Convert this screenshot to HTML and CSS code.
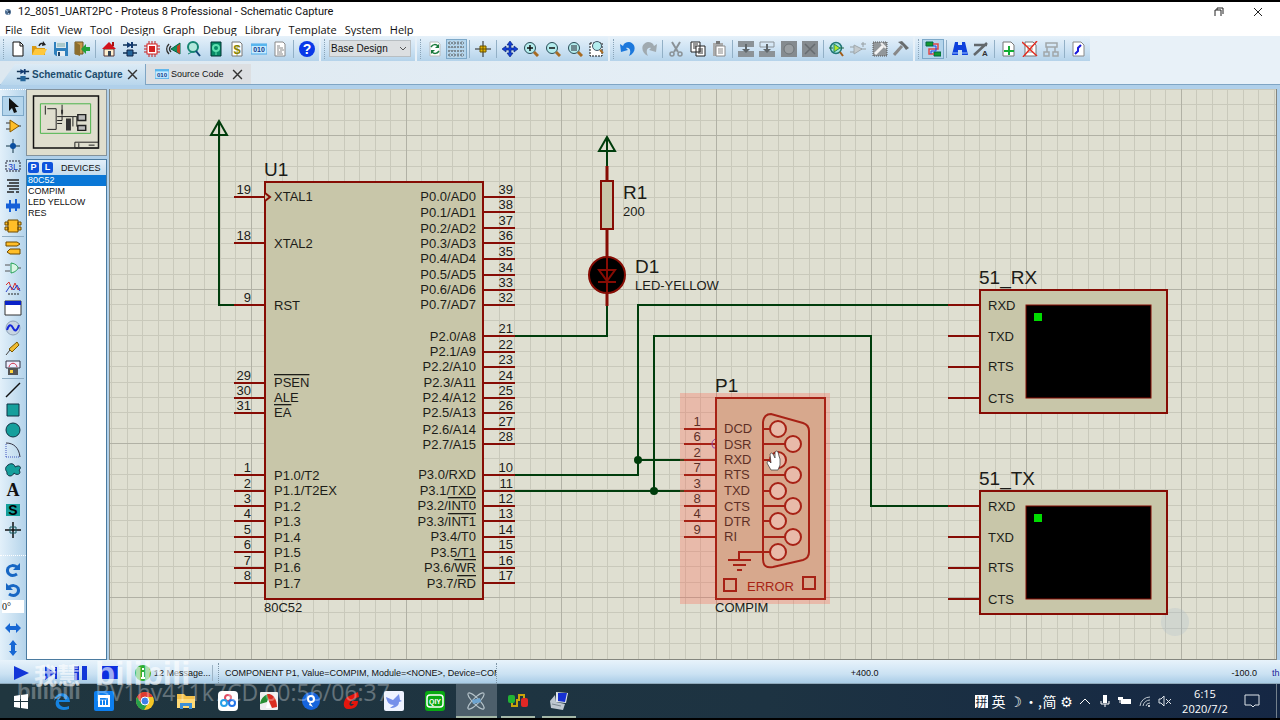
FILE: index.html
```html
<!DOCTYPE html>
<html lang="en">
<head>
<meta charset="utf-8">
<title>12_8051_UART2PC - Proteus 8 Professional - Schematic Capture</title>
<link rel="stylesheet" href="styles.css">
</head>
<body>
<div class="app">
  <header class="titlebar">
    <svg class="app-icon" viewBox="0 0 10 10"><circle cx="5" cy="5" r="3" fill="#4d6d91"/><path d="M3 3l3 2-1 3" stroke="#b6cbe0" fill="none"/><circle cx="6" cy="5" r="1" fill="#1b2c42"/></svg>
    <h1 class="title">12_8051_UART2PC - Proteus 8 Professional - Schematic Capture</h1>
    <div class="window-controls">
      <button aria-label="Restore"><svg viewBox="0 0 10 10"><path d="M1 9V3h6v6M3 3V1h6v6" fill="none" stroke="#222"/></svg></button>
      <button aria-label="Close"><svg viewBox="0 0 10 10"><path d="M1 1l8 8M9 1L1 9" fill="none" stroke="#222"/></svg></button>
    </div>
  </header>
  <nav class="menubar">
    <button>File</button><button>Edit</button><button>View</button><button>Tool</button><button>Design</button><button>Graph</button><button>Debug</button><button>Library</button><button>Template</button><button>System</button><button>Help</button>
  </nav>

  <div class="toolbars">
    <div class="group">
      <div class="seg four">
        <button aria-label="New"><svg viewBox="0 0 16 16"><path d="M3 1h7l3 3v11H3z" fill="#fff" stroke="#111"/><path d="M10 1v4h3" fill="none" stroke="#111"/></svg></button>
        <button aria-label="Open"><svg viewBox="0 0 16 16"><path d="M1 14V5h4l1 2h8v7z" fill="#d99a14"/><path d="M1 14l3-6h12l-3 6z" fill="#ffc83c"/><path d="M8 5c1-3 3-3 5-2" fill="none" stroke="#222" stroke-width="1.5"/><path d="M12 0l3 4-4 1z" fill="#222"/></svg></button>
        <button aria-label="Save"><svg viewBox="0 0 16 16"><path d="M1 1h14v14H3l-2-2z" fill="#2f80bd"/><path d="M3 1h10v6H3z" fill="#dce8ee"/><path d="M4 3h8M4 5h8" stroke="#7aa"/><path d="M4 10h8v5H4z" fill="#e8eef2"/><path d="M5 11h2v4H5z" fill="#246"/></svg></button>
        <button aria-label="Close project"><svg viewBox="0 0 16 16"><path d="M1 1h8v12H1z" fill="#c69a4a" stroke="#6b531f"/><path d="M1 1l5 3v11l-5-2z" fill="#8d6e2d"/><path d="M7 8l5-5v3h4v4h-4v3z" fill="#22a03a"/></svg></button>
      </div>
      <i class="sep"></i>
      <div class="seg nine">
        <button aria-label="Home"><svg viewBox="0 0 16 16"><path d="M3 8h10v7H3z" fill="#fff0d0" stroke="#533"/><path d="M1 8l7-7 7 7z" fill="#d2131c"/><path d="M11 1h2v4h-2z" fill="#a11"/><path d="M7 10h3v5H7z" fill="#345"/></svg></button>
        <button aria-label="Schematic capture"><svg viewBox="0 0 16 16"><path d="M1 4h14M1 12h14" stroke="#135" stroke-width="1.5"/><path d="M5 1l5 3-5 3z" fill="#123a70"/><path d="M10 1v6" stroke="#123a70" stroke-width="2"/><path d="M5 9h6v6H5z" fill="#24659a" stroke="#124"/></svg></button>
        <button aria-label="PCB layout"><svg viewBox="0 0 16 16"><path d="M0 5h16M0 8h16M0 11h16M5 0v16M8 0v16M11 0v16" stroke="#c31d1d"/><rect x="3" y="3" width="10" height="10" fill="#fff" stroke="#d32020"/><rect x="5" y="5" width="6" height="6" fill="#d32020"/></svg></button>
        <button aria-label="3D viewer"><svg viewBox="0 0 16 16"><path d="M15 2L6 8l9 5z" fill="#12905a" stroke="#064"/><path d="M12 5v6l3 2V3z" fill="#c44022"/><path d="M4 3c-3 3-3 7 0 10M6 5c-2 2-2 4 0 6" fill="none" stroke="#333" stroke-width="1.5"/></svg></button>
        <button aria-label="Gerber viewer"><svg viewBox="0 0 16 16"><circle cx="7" cy="6" r="5" fill="#b2e8dc" stroke="#168572" stroke-width="2"/><path d="M10 10l4 5" stroke="#147" stroke-width="2"/><path d="M2 13l4-2" stroke="#168572"/></svg></button>
        <button aria-label="Design explorer"><svg viewBox="0 0 16 16"><path d="M3 1h10v14H3z" fill="#078b66" stroke="#033"/><circle cx="8" cy="7" r="3" fill="none" stroke="#5fe0b0" stroke-width="2"/><path d="M8 10v4" stroke="#5fe0b0"/></svg></button>
        <button aria-label="Bill of materials"><svg viewBox="0 0 16 16"><path d="M3 1h8l2 2v12H3z" fill="#fff" stroke="#777"/><text x="8" y="13" class="glyph money">$</text></svg></button>
        <button aria-label="Source code"><svg viewBox="0 0 16 16"><path d="M0 3h16v10H0z" fill="#c7ecff" stroke="#49a9e8"/><path d="M0 3h16v2H0z" fill="#58b6ee"/><text x="8" y="11" class="glyph bits">010</text></svg></button>
        <button aria-label="Project notes"><svg viewBox="0 0 16 16"><path d="M3 1h8l2 2v12H3z" fill="#fff" stroke="#888"/><path d="M5 5h3M5 7h6M5 9h2M8 9h4M5 11h5M5 13h6" stroke="#888"/></svg></button>
      </div>
      <i class="sep"></i>
      <div class="seg one"><button aria-label="Help"><svg viewBox="0 0 16 16"><circle cx="8" cy="8" r="8" fill="#0a39e8"/><text x="8" y="13" class="glyph help">?</text></svg></button></div>
    </div>
    <div class="group">
      <div class="variant">
        <select aria-label="Design variant"><option>Base Design</option></select>
        <svg viewBox="0 0 8 8"><path d="M1 2l3 3 3-3" fill="none" stroke="#555"/></svg>
      </div>
    </div>
    <div class="group">
      <div class="seg two">
        <button aria-label="Redraw"><svg viewBox="0 0 16 16"><path d="M3 1h8l2 2v12H3z" fill="#fff" stroke="#bbb"/><path d="M4 6c2-3 5-3 7-1M12 10c-2 3-5 3-7 1" fill="none" stroke="#1a7a3c" stroke-width="1.5"/><path d="M12 3v4H8zM4 13V9h4z" fill="#1a7a3c"/></svg></button>
        <button class="pressed" aria-label="Grid"><svg viewBox="0 0 16 16"><path d="M0 2h16M0 6h16M0 10h16M0 14h16" stroke="#444" stroke-dasharray="2 1"/><path d="M2 0v16M6 0v16M10 0v16M14 0v16" stroke="#888" stroke-dasharray="1 2"/></svg></button>
      </div>
      <i class="sep"></i>
      <div class="seg one"><button aria-label="Origin"><svg viewBox="0 0 16 16"><path d="M8 0v16M0 8h16" stroke="#222"/><path d="M5 5h6v6H5z" fill="#e8b800" stroke="#6b5300"/><path d="M8 5v6M5 8h6" stroke="#6b5300"/></svg></button></div>
      <i class="sep"></i>
      <div class="seg five">
        <button aria-label="Pan"><svg viewBox="0 0 16 16"><path d="M8 0l3 4H9v3h3V5l4 3-4 3V9H9v3h2l-3 4-3-4h2V9H4v2L0 8l4-3v2h3V4H5z" fill="#1240d8" stroke="#08206e" stroke-width=".6"/></svg></button>
        <button aria-label="Zoom in"><svg viewBox="0 0 16 16"><circle cx="7" cy="7" r="5.5" fill="#b4edee" stroke="#264b55"/><path d="M11 11l4 4" stroke="#a86b22" stroke-width="3"/><path d="M4 7h6M7 4v6" stroke="#111" stroke-width="1.5"/></svg></button>
        <button aria-label="Zoom out"><svg viewBox="0 0 16 16"><circle cx="7" cy="7" r="5.5" fill="#b4edee" stroke="#264b55"/><path d="M11 11l4 4" stroke="#a86b22" stroke-width="3"/><path d="M4 7h6" stroke="#111" stroke-width="1.5"/></svg></button>
        <button aria-label="Zoom all"><svg viewBox="0 0 16 16"><circle cx="7" cy="7" r="5.5" fill="#b4edee" stroke="#264b55"/><path d="M11 11l4 4" stroke="#a86b22" stroke-width="3"/><path d="M4 4h6v6H4z" fill="#6d8a90"/></svg></button>
        <button aria-label="Zoom area"><svg viewBox="0 0 16 16"><path d="M2 2h12v13H2z" fill="#fff" stroke="#111" stroke-dasharray="2 1"/><circle cx="9" cy="5" r="4.5" fill="#b4edee" stroke="#456"/><path d="M12 9l3 3" stroke="#a86b22" stroke-width="2"/></svg></button>
      </div>
    </div>
    <div class="group">
      <div class="seg two">
        <button aria-label="Undo"><svg viewBox="0 0 16 16"><path d="M0 3l1 8 7-2-2-2c3-1 6 2 3 8 8-4 7-13 0-14-3 0-5 1-6 4z" fill="#1c78dc"/></svg></button>
        <button aria-label="Redo"><svg viewBox="0 0 16 16"><path d="M16 3l-1 8-7-2 2-2c-3-1-6 2-3 8-8-4-7-13 0-14 3 0 5 1 6 4z" fill="#a0aab0"/></svg></button>
      </div>
      <i class="sep"></i>
      <div class="seg three">
        <button aria-label="Cut"><svg viewBox="0 0 16 16"><path d="M4 1l6 10M12 1L6 11" stroke="#8a9297" stroke-width="2"/><circle cx="4" cy="13" r="2" fill="none" stroke="#8a9297" stroke-width="1.5"/><circle cx="12" cy="13" r="2" fill="none" stroke="#8a9297" stroke-width="1.5"/></svg></button>
        <button aria-label="Copy"><svg viewBox="0 0 16 16"><path d="M1 1h9v10H1zM6 5h9v10H6z" fill="#fff" stroke="#222"/><path d="M3 3h5M3 5h3M3 7h3M8 8h5M8 10h5M8 12h5" stroke="#333"/></svg></button>
        <button aria-label="Paste"><svg viewBox="0 0 16 16"><path d="M2 2h10v13H2z" fill="#aaa"/><path d="M5 0h4v3H5z" fill="#777"/><path d="M5 5h9v10H5z" fill="#fff" stroke="#888"/><path d="M7 8h5M7 10h5M7 12h5" stroke="#888"/></svg></button>
      </div>
      <i class="sep"></i>
      <div class="seg four">
        <button aria-label="Block copy"><svg viewBox="0 0 16 16"><path d="M0 0h16v6H0zM0 10h16v6H0z" fill="#8b9297"/><path d="M7 3h2v5h3l-4 4-4-4h3z" fill="#5f666a"/></svg></button>
        <button aria-label="Block move"><svg viewBox="0 0 16 16"><path d="M1 1h14v5H1z" fill="none" stroke="#8b9297"/><path d="M0 10h16v6H0z" fill="#8b9297"/><path d="M7 3h2v5h3l-4 4-4-4h3z" fill="#5f666a"/></svg></button>
        <button aria-label="Block rotate"><svg viewBox="0 0 16 16"><path d="M0 0h16v16H0z" fill="#858b8f"/><circle cx="8" cy="8" r="5" fill="#9a9fa2" stroke="#6e7477"/></svg></button>
        <button aria-label="Block delete"><svg viewBox="0 0 16 16"><path d="M0 0h16v16H0z" fill="#858b8f"/><path d="M3 3l10 10M13 3L3 13" stroke="#676c70" stroke-width="1.5"/></svg></button>
      </div>
      <i class="sep"></i>
      <div class="seg four">
        <button aria-label="Pick parts"><svg viewBox="0 0 16 16"><circle cx="7" cy="7" r="5.5" fill="#a8e6e0" stroke="#277" stroke-width="1.5"/><path d="M5 3l6 4-6 4z" fill="#b4e628" stroke="#286"/><path d="M0 7h4M11 7h4" stroke="#264"/><path d="M11 11l3 4" stroke="#a25c18" stroke-width="2"/></svg></button>
        <button aria-label="Make device"><svg viewBox="0 0 16 16"><path d="M4 4l8 4-8 5z" fill="#c4cacd" stroke="#a0a8ac"/><path d="M0 6h4M0 11h4M11 8h5M13 1v5M11 3h5" stroke="#969ea2"/></svg></button>
        <button aria-label="Packaging tool"><svg viewBox="0 0 16 16"><path d="M1 1h14v14H1z" fill="#92979a" stroke="#555" stroke-dasharray="1 1"/><path d="M3 13l8-8" stroke="#f4f4f4" stroke-width="3"/><path d="M9 2l5 5" stroke="#eee" stroke-width="2"/></svg></button>
        <button aria-label="Decompose"><svg viewBox="0 0 16 16"><path d="M1 14l8-9" stroke="#888" stroke-width="3"/><path d="M5 1l4-1 7 7-3 2-3-4z" fill="#686c6e"/></svg></button>
      </div>
    </div>
    <div class="group">
      <div class="seg one"><button class="pressed" aria-label="Wire autorouter"><svg viewBox="0 0 16 16"><path d="M1 1h7v4H1zM9 11h7v4H9z" fill="#159a2d" stroke="#064"/><path d="M8 3h5v5H4v5h5" fill="none" stroke="#e04848" stroke-width="1.5"/><path d="M8 5h3v5H6v3" fill="none" stroke="#1747e8"/></svg></button></div>
      <i class="sep"></i>
      <div class="seg two">
        <button aria-label="Search"><svg viewBox="0 0 16 16"><path d="M3 1h3v3h4V1h3l3 13h-6V9H6v5H0z" fill="#0d40dc"/><path d="M1 12h5M10 12h5" stroke="#9bc4ff"/></svg></button>
        <button aria-label="Property assignment"><svg viewBox="0 0 16 16"><path d="M1 14L14 2M1 4h13" stroke="#62686c" stroke-width="2.5"/><text x="12" y="15" class="glyph prop">A</text></svg></button>
      </div>
      <i class="sep"></i>
      <div class="seg three">
        <button aria-label="New sheet"><svg viewBox="0 0 16 16"><path d="M3 1h8l3 3v11H3z" fill="#fff" stroke="#777"/><path d="M9 5v9M4 10h10" stroke="#13ad34" stroke-width="2"/></svg></button>
        <button aria-label="Remove sheet"><svg viewBox="0 0 16 16"><path d="M3 1h8l3 3v11H3z" fill="#fff" stroke="#777"/><path d="M5 5h6M5 8h6M5 11h6" stroke="#999"/><path d="M0 1l15 14M15 0L1 16" stroke="#e12e22" stroke-width="1.5"/></svg></button>
        <button aria-label="Exit to parent"><svg viewBox="0 0 16 16"><path d="M3 2h11v4H3zM1 11h5v4H1zM10 11h5v4h-5zM4 6v5M12 6v5" fill="none" stroke="#a0a6a9" stroke-width="1.5"/></svg></button>
      </div>
      <i class="sep"></i>
      <div class="seg one"><button aria-label="Electrical rules check"><svg viewBox="0 0 16 16"><path d="M3 1h8l3 3v11H3z" fill="#fff" stroke="#888"/><path d="M11 4L8 7v3l-3 3" fill="none" stroke="#1818dc" stroke-width="2"/></svg></button></div>
    </div>
  </div>

  <div class="tabs">
    <div class="tab active">
      <svg class="tab-icon" viewBox="0 0 16 16"><path d="M1 4h14M1 12h14" stroke="#135" stroke-width="1.5"/><path d="M5 1l5 3-5 3z" fill="#123a70"/><path d="M10 1v6" stroke="#123a70" stroke-width="2"/><path d="M5 9h6v6H5z" fill="#24659a"/></svg>
      <button class="tab-label">Schematic Capture</button>
      <button class="tab-close" aria-label="Close Schematic Capture"><svg viewBox="0 0 10 10"><path d="M1 1l8 8M9 1L1 9" stroke="#333" stroke-width="1.3"/></svg></button>
    </div>
    <div class="tab">
      <svg class="tab-icon" viewBox="0 0 16 16"><path d="M0 3h16v10H0z" fill="#c7ecff" stroke="#49a9e8"/><path d="M0 3h16v2H0z" fill="#58b6ee"/><text x="8" y="11" class="glyph bits">010</text></svg>
      <button class="tab-label">Source Code</button>
      <button class="tab-close" aria-label="Close Source Code"><svg viewBox="0 0 10 10"><path d="M1 1l8 8M9 1L1 9" stroke="#333" stroke-width="1.3"/></svg></button>
    </div>
  </div>

  <main class="workspace">
    <div class="modes">
      <div class="mode-set">
        <button class="pressed" aria-label="Selection"><svg viewBox="0 0 16 16"><path d="M4 0v13l3-3 2 5 3-1-2-5h4z" fill="#111"/></svg></button>
        <button aria-label="Component"><svg viewBox="0 0 16 16"><path d="M1 5h4M1 11h4M13 8h3" stroke="#333"/><path d="M5 2l9 6-9 6z" fill="#ffbe28" stroke="#8a5a00"/></svg></button>
        <button aria-label="Junction"><svg viewBox="0 0 16 16"><path d="M8 1v14M1 8h14" stroke="#134"/><circle cx="8" cy="8" r="3" fill="#0b4fa0"/></svg></button>
        <button aria-label="Wire label"><svg viewBox="0 0 16 16"><path d="M1 3h14v10H1z" fill="none" stroke="#223" stroke-dasharray="2 1"/><text x="8" y="12" class="glyph lbl">3L</text></svg></button>
        <button aria-label="Text script"><svg viewBox="0 0 16 16"><path d="M2 2h12M4 5h10M2 8h12M4 11h10M2 14h7M11 14h3" stroke="#222" stroke-width="1.4"/></svg></button>
        <button aria-label="Buses"><svg viewBox="0 0 16 16"><path d="M1 8h14" stroke="#1560d8" stroke-width="5"/><path d="M5 2v12M11 1v12" stroke="#1560d8" stroke-width="2"/></svg></button>
        <button aria-label="Subcircuit"><svg viewBox="0 0 16 16"><path d="M3 2h10v12H3zM0 4h3v3H0zM0 9h3v3H0zM13 4h3v3h-3zM13 9h3v3h-3z" fill="#ffbe28" stroke="#6e4a00"/></svg></button>
      </div>
      <div class="mode-set">
        <button aria-label="Terminals"><svg viewBox="0 0 16 16"><path d="M1 2h11l3 2-3 2H1zM15 9H5l-3 3 3 2h10z" fill="#ffbe28" stroke="#6e4a00"/></svg></button>
        <button aria-label="Device pins"><svg viewBox="0 0 16 16"><path d="M0 5h5M0 11h5M12 8h4" stroke="#555"/><path d="M6 3c6 1 7 4 7 5s-2 4-7 5z" fill="#d9f5e4" stroke="#22a055"/></svg></button>
        <button aria-label="Graph"><svg viewBox="0 0 16 16"><path d="M1 5l3-3 3 8 3-7 3 7 2-2" fill="none" stroke="#d63030"/><path d="M1 12l4-6 4 4 3-5 3 6" fill="none" stroke="#2940c8"/><path d="M3 14h12" stroke="#222" stroke-dasharray="2 1"/></svg></button>
        <button aria-label="Active popup"><svg viewBox="0 0 16 16"><path d="M0 1h16v14H0z" fill="#fff" stroke="#333"/><path d="M0 1h16v4H0z" fill="#0a22c8"/></svg></button>
        <button aria-label="Generator"><svg viewBox="0 0 16 16"><circle cx="8" cy="8" r="7" fill="#c8d5e2" stroke="#8fa3b8"/><path d="M2 10c2-6 4-6 6-2s4 3 6-3" fill="none" stroke="#1728d8" stroke-width="2"/></svg></button>
        <button aria-label="Probe"><svg viewBox="0 0 16 16"><path d="M1 15l4-5" stroke="#444"/><path d="M4 9l8-7 2 3-7 7z" fill="#f0bb30" stroke="#795800"/></svg></button>
        <button aria-label="Instruments"><svg viewBox="0 0 16 16"><path d="M1 1h14v7H1z" fill="#eef" stroke="#334"/><path d="M4 7c1-5 7-5 8 0" fill="none" stroke="#d13048"/><path d="M3 8h10v7H3z" fill="#555"/><path d="M5 10h3v3H5z" fill="#ffd33c"/></svg></button>
      </div>
      <div class="mode-set">
        <button aria-label="Line"><svg viewBox="0 0 16 16"><path d="M1 15L15 1" stroke="#111" stroke-width="1.5"/></svg></button>
        <button aria-label="Box"><svg viewBox="0 0 16 16"><path d="M2 2h12v12H2z" fill="#159f9c" stroke="#134"/></svg></button>
        <button aria-label="Circle"><svg viewBox="0 0 16 16"><circle cx="8" cy="8" r="7" fill="#159f9c" stroke="#134"/></svg></button>
        <button aria-label="Arc"><svg viewBox="0 0 16 16"><path d="M1 15V1M1 15h14" stroke="#445ac0" stroke-dasharray="1 1"/><path d="M1 1c8 0 13 5 14 14" fill="none" stroke="#334"/></svg></button>
        <button aria-label="Path"><svg viewBox="0 0 16 16"><path d="M3 3c4-3 7 0 7 2 5-3 7 1 4 3 3 4-2 6-5 3-2 5-8 3-7-1C0 8 0 5 3 3z" fill="#159f9c" stroke="#134"/></svg></button>
        <button aria-label="Text"><svg viewBox="0 0 16 16"><text x="8" y="14" class="glyph letter">A</text></svg></button>
        <button aria-label="Symbol"><svg viewBox="0 0 16 16"><path d="M1 2h14v12H1z" fill="#159f9c"/><text x="8" y="13" class="glyph sym">S</text></svg></button>
        <button aria-label="Marker"><svg viewBox="0 0 16 16"><path d="M8 0v16M0 8h16" stroke="#111" stroke-width="1.5"/><path d="M5 5h6v6H5z" fill="none" stroke="#165b60"/></svg></button>
      </div>
      <div class="orient">
        <button aria-label="Rotate clockwise"><svg viewBox="0 0 16 16"><path d="M12 12C6 16 1 11 3 6c2-3 6-3 9-1" fill="none" stroke="#1767c4" stroke-width="3"/><path d="M15 1v7H8z" fill="#1767c4"/></svg></button>
        <button aria-label="Rotate anticlockwise"><svg viewBox="0 0 16 16"><path d="M4 12c6 4 11-1 9-6-2-3-6-3-9-1" fill="none" stroke="#1767c4" stroke-width="3"/><path d="M1 1v7h7z" fill="#1767c4"/></svg></button>
        <input class="angle" aria-label="Rotation angle" value="0°">
        <button aria-label="Mirror horizontally"><svg viewBox="0 0 16 16"><path d="M0 8l5-5v3h6V3l5 5-5 5v-3H5v3z" fill="#1767d4"/></svg></button>
        <button aria-label="Mirror vertically"><svg viewBox="0 0 16 16"><path d="M8 0l4 5h-2v6h2l-4 5-4-5h2V5H4z" fill="#1767d4"/></svg></button>
      </div>
    </div>

    <aside class="side">
      <div class="overview">
        <svg viewBox="0 0 79 66"><path d="M6 6h66v53H6z" fill="none" stroke="#111" stroke-width="1.5"/><path d="M13 14h51v30H13z" fill="none" stroke="#4ab44a"/><path d="M18 16v9M20 19h9v21h-9M30 27h16v-0h4v10h4M30 31h5v-4M30 34h5M35 15v11M46 27v10" fill="none" stroke="#222"/><path d="M34 20h2v4h-2zM39 29h5v12h-5z" fill="#333"/><path d="M51 25h8v6h-8zM51 36h8v5h-8z" fill="#bbb" stroke="#222" stroke-width="1.5"/><path d="M48 53h24v6H48zM52 54v4M62 56h6" fill="none" stroke="#222"/></svg>
      </div>
      <div class="devices">
        <div class="devices-head"><button class="badge">P</button><button class="badge">L</button><span class="devices-title">DEVICES</span></div>
        <ul class="device-list">
          <li class="selected">80C52</li><li>COMPIM</li><li>LED YELLOW</li><li>RES</li>
        </ul>
      </div>
    </aside>

    <section class="canvas" aria-label="Schematic">
      <svg class="sheet">
        <defs>
          <pattern id="grid" x="251" y="135" width="155" height="154" patternUnits="userSpaceOnUse">
            <path class="minor" d="M15 0h1v154h-1zM31 0h1v154h-1zM46 0h1v154h-1zM62 0h1v154h-1zM77 0h1v154h-1zM93 0h1v154h-1zM108 0h1v154h-1zM124 0h1v154h-1zM139 0h1v154h-1zM0 15h155v1H0zM0 31h155v1H0zM0 46h155v1H0zM0 62h155v1H0zM0 77h155v1H0zM0 93h155v1H0zM0 108h155v1H0zM0 123h155v1H0zM0 139h155v1H0z"/>
            <path class="major" d="M0 0h1v154H0zM0 0h155v1H0z"/>
          </pattern>
        </defs>
        <g transform="translate(-110 -89)">
          <rect x="109" y="89" width="110%" height="100%" fill="url(#grid)"/>
          <circle cx="1175" cy="622" r="14" fill="#a8bccb" opacity=".25"/>

          <g class="wire">
            <path d="M219 135V305H235M515 336H607V306M515 475H638V305H948M515 491H684M654 491V336H871V506H948M638 460H684M607 150V166"/>
            <path d="M219 121l-8 14h16zM607 137l-8 14h16zM219 121v16M607 137v16"/>
          </g>
          <circle class="node" cx="638" cy="460" r="4"/><circle class="node" cx="654" cy="491" r="4"/>

          <g class="part">
            <rect x="265" y="182" width="218" height="417"/>
            <path d="M234 197h31M234 243h31M234 305h31M234 383h31M234 398h31M234 413h31M234 475h31M234 491h31M234 506h31M234 521h31M234 537h31M234 552h31M234 568h31M234 583h31"/>
            <path d="M483 197h32M483 212h32M483 228h32M483 243h32M483 259h32M483 275h32M483 290h32M483 305h32M483 336h32M483 352h32M483 367h32M483 383h32M483 398h32M483 413h32M483 429h32M483 444h32M483 475h32M483 491h32M483 506h32M483 521h32M483 537h32M483 552h32M483 568h32M483 583h32"/>
            <path d="M265 193l5 4-5 4"/>
          </g>
          <text class="ref" x="264" y="176">U1</text>
          <text class="pin" x="264" y="612">80C52</text>
          <g class="pin">
            <text x="274" y="201">XTAL1</text><text x="274" y="248">XTAL2</text><text x="274" y="310">RST</text><text class="bar" x="274" y="387">PSEN</text><text x="274" y="402">ALE</text><text class="bar" x="274" y="417">EA</text>
            <text x="274" y="480">P1.0/T2</text><text x="274" y="495">P1.1/T2EX</text><text x="274" y="511">P1.2</text><text x="274" y="526">P1.3</text><text x="274" y="542">P1.4</text><text x="274" y="557">P1.5</text><text x="274" y="572">P1.6</text><text x="274" y="588">P1.7</text>
          </g>
          <g class="pin end">
            <text x="251" y="194">19</text><text x="251" y="240">18</text><text x="251" y="302">9</text><text x="251" y="380">29</text><text x="251" y="395">30</text><text x="251" y="410">31</text><text x="251" y="472">1</text><text x="251" y="488">2</text><text x="251" y="503">3</text><text x="251" y="518">4</text><text x="251" y="534">5</text><text x="251" y="549">6</text><text x="251" y="565">7</text><text x="251" y="580">8</text>
            <text x="476" y="201">P0.0/AD0</text><text x="476" y="217">P0.1/AD1</text><text x="476" y="233">P0.2/AD2</text><text x="476" y="248">P0.3/AD3</text><text x="476" y="263">P0.4/AD4</text><text x="476" y="279">P0.5/AD5</text><text x="476" y="294">P0.6/AD6</text><text x="476" y="309">P0.7/AD7</text>
            <text x="476" y="341">P2.0/A8</text><text x="476" y="356">P2.1/A9</text><text x="476" y="371">P2.2/A10</text><text x="476" y="387">P2.3/A11</text><text x="476" y="402">P2.4/A12</text><text x="476" y="417">P2.5/A13</text><text x="476" y="434">P2.6/A14</text><text x="476" y="449">P2.7/A15</text>
            <text x="476" y="479">P3.0/RXD</text><text x="476" y="495">P3.1/TXD</text><text x="476" y="510">P3.2/<tspan class="bar">INT0</tspan></text><text x="476" y="526">P3.3/<tspan class="bar">INT1</tspan></text><text x="476" y="541">P3.4/T0</text><text x="476" y="557">P3.5/T1</text><text x="476" y="572">P3.6/<tspan class="bar">WR</tspan></text><text x="476" y="588">P3.7/<tspan class="bar">RD</tspan></text>
            <text x="513" y="194">39</text><text x="513" y="209">38</text><text x="513" y="225">37</text><text x="513" y="240">36</text><text x="513" y="256">35</text><text x="513" y="272">34</text><text x="513" y="287">33</text><text x="513" y="302">32</text>
            <text x="513" y="333">21</text><text x="513" y="349">22</text><text x="513" y="364">23</text><text x="513" y="380">24</text><text x="513" y="395">25</text><text x="513" y="410">26</text><text x="513" y="426">27</text><text x="513" y="441">28</text>
            <text x="513" y="472">10</text><text x="513" y="488">11</text><text x="513" y="503">12</text><text x="513" y="518">13</text><text x="513" y="534">14</text><text x="513" y="549">15</text><text x="513" y="565">16</text><text x="513" y="580">17</text>
          </g>

          <g class="part">
            <path d="M607 166v15M607 229v28M607 292v14" stroke-width="3"/>
            <rect x="601" y="181" width="12" height="48"/>
            <circle class="dark" cx="607" cy="275" r="18"/>
            <path d="M607 257v36M599 270h16l-8 11zM598 282h18" fill="none"/>
          </g>
          <text class="ref" x="623" y="199">R1</text><text class="pin" x="623" y="216">200</text>
          <text class="ref" x="635" y="273">D1</text><text class="pin" x="635" y="290">LED-YELLOW</text>

          <g id="terminal">
            <g class="part">
              <rect x="980" y="290" width="187" height="123"/>
              <rect class="dark thin" x="1026" y="305" width="125" height="93"/>
              <path d="M948 305h32M948 336h32M948 367h32M948 398h32"/>
            </g>
            <rect x="1034" y="313" width="8" height="8" fill="#00dc00"/>
            <g class="pin"><text x="988" y="310">RXD</text><text x="988" y="341">TXD</text><text x="988" y="371">RTS</text><text x="988" y="403">CTS</text></g>
          </g>
          <use href="#terminal" y="201"/>
          <text class="ref" x="979" y="284">51_RX</text>
          <text class="ref" x="979" y="485">51_TX</text>

          <g class="part">
            <rect x="716" y="398" width="109" height="201"/>
            <path d="M684 429h31M684 444h31M684 460h31M684 475h31M684 491h31M684 506h31M684 521h31M684 537h31"/>
            <path d="M763 422q1-8 8-8l32 9q6 2 6 8v121q0 6-6 8l-30 7q-10 2-10-8zM763 429h7M763 444h23M763 460h7M763 475h23M763 491h7M763 506h23M763 521h7M763 537h23M770 552h-31v8M728 560h23M733 565h13M737 570h5" fill="none"/>
            <g class="socket"><circle cx="778" cy="429" r="8"/><circle cx="793" cy="444" r="8"/><circle cx="778" cy="460" r="8"/><circle cx="793" cy="475" r="8"/><circle cx="778" cy="491" r="8"/><circle cx="793" cy="506" r="8"/><circle cx="778" cy="521" r="8"/><circle cx="793" cy="537" r="8"/><circle cx="778" cy="552" r="8"/></g>
            <path d="M724 579h12v12h-12zM803 577h12v12h-12z" fill="none"/>
          </g>
          <path d="M715 439q-4 2-3 6t3 3" fill="none" stroke="#6a3fc0"/>
          <g class="pin"><text x="724" y="433">DCD</text><text x="724" y="449">DSR</text><text x="724" y="464">RXD</text><text x="724" y="479">RTS</text><text x="724" y="495">TXD</text><text x="724" y="511">CTS</text><text x="724" y="526">DTR</text><text x="724" y="541">RI</text></g>
          <g class="pin mid"><text x="697" y="426">1</text><text x="697" y="441">6</text><text x="697" y="457">2</text><text x="697" y="472">7</text><text x="697" y="488">3</text><text x="697" y="503">8</text><text x="697" y="518">4</text><text x="697" y="534">9</text></g>
          <text class="pin error" x="747" y="591">ERROR</text>
          <rect x="680" y="393" width="150" height="211" fill="#ff5a46" opacity=".28"/>
          <text class="ref" x="715" y="392">P1</text>
          <text class="pin" x="715" y="612">COMPIM</text>
          <path d="M770 454q2-2 3 0l2 4v-6q2-2 3 0l1 4 1 3v6l-2 5h-7l-4-7q0-2 2-2l2 2z" fill="#fff" stroke="#333" stroke-width=".7"/>
        </g>
      </svg>
    </section>
  </main>

  <footer class="statusbar">
    <div class="sim">
      <button aria-label="Run"><svg viewBox="0 0 16 16"><path d="M1 1l15 7-15 7z" fill="#1236d8"/></svg></button>
      <button aria-label="Step"><svg viewBox="0 0 16 16"><path d="M2 1l10 7-10 7zM12 2h2v12h-2z" fill="#1236d8"/></svg></button>
      <button aria-label="Pause"><svg viewBox="0 0 16 16"><path d="M2 1h5v14H2zM10 1h5v14h-5z" fill="#1236d8"/></svg></button>
      <button aria-label="Stop"><svg viewBox="0 0 16 16"><path d="M0 1h16v13H0z" fill="#0c2fe0"/></svg></button>
    </div>
    <button class="messages"><svg viewBox="0 0 16 16"><circle cx="8" cy="8" r="8" fill="#2fae32"/><path d="M8 3v2M8 7v6M6 13h4" stroke="#fff" stroke-width="2"/></svg>12 Message...</button>
    <div class="status-text">COMPONENT P1, Value=COMPIM, Module=&lt;NONE&gt;, Device=COM</div>
    <div class="coords"><span class="cx">+400.0</span><span class="cy">-100.0</span><span class="unit">th</span></div>
  </footer>

  <div class="taskbar">
    <div class="apps">
      <button aria-label="Start"><svg viewBox="0 0 20 20"><path d="M3 5l6-1v6H3zM10 4l7-1v7h-7zM3 11h6v6l-6-1zM10 11h7v7l-7-1z" fill="#fff"/></svg></button>
      <button aria-label="Edge"><svg viewBox="0 0 20 20"><path d="M2 10C3 0 17-1 18 11H7c0 5 6 6 10 4v3C9 21 2 17 4 10c1-2 3-4 5-4-1 1-2 2-2 3h6c0-5-8-5-11 1z" fill="#1683e0"/></svg></button>
      <button aria-label="Maxthon"><svg viewBox="0 0 20 20"><rect width="20" height="20" rx="2" fill="#0d7ff0"/><path d="M4 4h12v12H4z" fill="#fff"/><path d="M7 14V8h6v6M10 8v6" fill="none" stroke="#0d7ff0" stroke-width="2"/></svg></button>
      <button aria-label="Chrome"><svg viewBox="0 0 20 20"><circle cx="10" cy="10" r="9" fill="#f6c625"/><path d="M2 6a9 9 0 0 1 16 0h-8l-4 6z" fill="#df3b30"/><path d="M2 6a9 9 0 0 0 7 13l4-7H6z" fill="#26a04b"/><circle cx="10" cy="10" r="4" fill="#3f7fe8" stroke="#fff"/></svg></button>
      <button aria-label="Explorer"><svg viewBox="0 0 20 20"><path d="M1 3h7l2 2h9v12H1z" fill="#f3c04a"/><path d="M1 8h18v9H1z" fill="#ffda76"/><path d="M4 18v-6h12v6h-3v-3H7v3z" fill="#3b8fd8"/></svg></button>
      <button aria-label="Cloud disk"><svg viewBox="0 0 20 20"><rect width="20" height="20" rx="4" fill="#fff"/><circle cx="10" cy="7" r="3" fill="none" stroke="#e04c62" stroke-width="2"/><circle cx="6" cy="12" r="3" fill="none" stroke="#27a0e8" stroke-width="2"/><circle cx="14" cy="12" r="3" fill="none" stroke="#2374e8" stroke-width="2"/></svg></button>
      <button aria-label="Recorder"><svg viewBox="0 0 20 20"><rect x="1" y="1" width="18" height="18" rx="1" fill="#eee"/><path d="M1 13C2 6 7 3 11 3l-3 8z" fill="#268d31"/><path d="M8 3c6-1 10 5 10 13l-5 1-4-9z" fill="#d92d20"/><path d="M9 9l3 8H7z" fill="#fff"/></svg></button>
      <button aria-label="Maps"><svg viewBox="0 0 20 20"><circle cx="10" cy="10" r="9" fill="#1664dc"/><circle cx="10" cy="8" r="4" fill="#fff"/><path d="M9 11l3 5-4-2z" fill="#fff"/><circle cx="10" cy="8" r="2" fill="#1664dc"/></svg></button>
      <button aria-label="Foxit"><svg viewBox="0 0 20 20"><path d="M16 1L5 6C0 11 1 19 7 18c7 0 9-4 9-8h-6l-1 3h3c-2 3-6 2-4-2 2-3 6-4 9-5z" fill="#e4160c"/></svg></button>
      <button aria-label="Thunder"><svg viewBox="0 0 20 20"><rect width="20" height="20" rx="2" fill="#eef3ff"/><path d="M2 6l7 3 6-6 1 6 2 1-3 1c0 4-4 6-9 6l4-3C5 14 3 11 2 6z" fill="#7590ea"/></svg></button>
      <button aria-label="iQIYI"><svg viewBox="0 0 20 20"><rect width="20" height="20" rx="3" fill="#08aa12"/><rect x="2" y="4" width="16" height="12" rx="3" fill="none" stroke="#fff" stroke-width="1.5"/><text x="10" y="13" class="glyph iqiyi">QIY</text></svg></button>
      <button class="current running" aria-label="Proteus"><svg viewBox="0 0 20 20"><ellipse cx="10" cy="10" rx="11" ry="3" fill="none" stroke="#b6c4cb" transform="rotate(45 10 10)"/><ellipse cx="10" cy="10" rx="11" ry="3" fill="none" stroke="#b6c4cb" transform="rotate(-45 10 10)"/><path d="M6 9l8-2 1 4-8 2z" fill="#6da4d0"/></svg></button>
      <button class="running" aria-label="Virtual serial port"><svg viewBox="0 0 20 20"><path d="M4 11v4h5V9h2V4h5v6" fill="none" stroke="#c9a40c" stroke-width="2"/><rect y="4" width="7" height="8" rx="2" fill="#21b434"/><rect x="13" y="7" width="7" height="9" rx="2" fill="#e12825"/></svg></button>
      <button class="running" aria-label="Serial monitor"><svg viewBox="0 0 20 20"><path d="M7 1l12 1-2 10-10-1z" fill="#dfe5ea"/><path d="M9 2h9l-2 9-7-1z" fill="#1730d2"/><path d="M1 10l5-6 1 7 9 2-2 6-12-2z" fill="#bec7d0"/><path d="M3 13l9 2" stroke="#7c8790"/></svg></button>
    </div>
    <div class="tray">
      <div class="ime"><span class="boxed">拼</span><span>英</span><span>☽</span><span>•,</span><span>简</span><span>⚙</span></div>
      <div class="system">
        <button aria-label="Hidden icons"><svg viewBox="0 0 14 14"><path d="M2 10l5-5 5 5" fill="none" stroke="#fff"/></svg></button>
        <button aria-label="Microphone"><svg viewBox="0 0 14 14"><path d="M5 1h4v8H5z" fill="#fff"/><path d="M3 7v3h8V7M7 10v3" fill="none" stroke="#fff"/></svg></button>
        <button aria-label="Battery"><svg viewBox="0 0 14 14"><path d="M3 5h10v5H3zM0 3h5v3H0z" fill="#fff"/><path d="M2 6v3" stroke="#fff"/></svg></button>
        <button aria-label="Network"><svg viewBox="0 0 14 14"><path d="M2 12A10 10 0 0 1 12 3M5 12a7 7 0 0 1 7-6M8 12a4 4 0 0 1 4-3" fill="none" stroke="#bec7d0"/><circle cx="11" cy="12" r="1" fill="#fff"/></svg></button>
        <button aria-label="Volume"><svg viewBox="0 0 14 14"><path d="M1 5h2l3-3v10L3 9H1zM8 5l5 5M13 5l-5 5" fill="none" stroke="#dde3e9"/></svg></button>
      </div>
      <button class="clock"><span>6:15</span><span>2020/7/2</span></button>
      <button class="notify" aria-label="Notifications"><svg viewBox="0 0 16 16"><path d="M1 2h14v10h-4l-2 2-2-2H1z" fill="none" stroke="#dde3e9"/></svg></button>
    </div>
  </div>

  <div class="watermark" aria-hidden="true">
    <span class="wm small">bilibili</span>
    <span class="wm name">我慧</span>
    <span class="wm large">bilibili</span>
    <span class="wm time">BV1hv411k7CD 00:56/06:37</span>
  </div>
</div>
</body>
</html>
```
FILE: styles.css
```css
* { box-sizing: border-box; }
body { margin: 0; background: #000; font-family: "Liberation Sans", Arial, sans-serif; color: #111; }
button { border: 0; padding: 0; margin: 0; background: none; font: inherit; color: inherit; }
button svg { display: block; }
.app { position: relative; display: flex; flex-direction: column; height: 100vh; border-top: 2px solid #000; border-bottom: 2px solid #000; overflow: hidden; }

.titlebar { display: flex; align-items: center; height: 20px; flex: none; background: #fff; padding: 0 3px; gap: 5px; }
.app-icon { width: 10px; height: 10px; }
.title { margin: 0; flex: 1; font: 400 11px/18px Roboto, "Noto Sans", sans-serif; }
.window-controls { display: flex; }
.window-controls button { width: 39px; display: flex; justify-content: center; }
.window-controls svg { width: 10px; height: 10px; }

.menubar { display: flex; height: 14px; flex: none; background: #fff; padding-left: 5px; gap: 8px; font: 11px/15px "Open Sans", "Noto Sans", sans-serif; }

.toolbars { display: flex; gap: 2px; height: 25px; flex: none; background: #e8f1f8; }
.group { display: flex; align-items: center; padding: 0 1px 0 7px; background: linear-gradient(#e6f1fa, #c9e0f2 60%, #b5d3ea); position: relative; }
.group::before { content: ""; position: absolute; left: 3px; top: 3px; bottom: 2px; border-left: 1px dotted #8aa4b8; }
.seg { display: flex; height: 20px; }
.seg button { flex: 1; display: flex; align-items: center; justify-content: center; }
.seg svg { width: 16px; height: 16px; }
.one { width: 22px; }
.two { width: 43px; }
.three { width: 65px; }
.four { width: 86px; }
.five { width: 108px; }
.nine { width: 193px; }
.sep { width: 1px; height: 18px; margin: 0 2px; background: #92b0c6; }
.pressed { background: #b4d5ec; outline: 1px solid #7da8c8; outline-offset: -1px; }
.variant { display: flex; align-items: center; width: 82px; height: 17px; padding-right: 3px; margin: 0 3px 0 1px; border: 1px solid #b8bec2; background: #dcdfe1; }
.variant select { appearance: none; flex: 1; min-width: 0; height: 15px; border: 0; padding: 0 0 0 1px; margin: 0; background: none; font: 10px "Liberation Sans", Arial, sans-serif; color: #111; }
.variant svg { width: 8px; height: 8px; flex: none; }

.glyph { font-family: "Liberation Sans", Arial, sans-serif; font-weight: 700; text-anchor: middle; }
.money { font-size: 13px; fill: #8a8400; }
.bits { font-size: 7px; fill: #12388a; }
.help { font-size: 14px; fill: #fff; }
.prop { font-size: 8px; fill: #333; }
.lbl { font-size: 9px; fill: #1a3bc0; font-weight: 400; }
.letter { font-family: "Liberation Serif", serif; font-size: 18px; fill: #111; }
.sym { font-size: 14px; fill: #000; }
.iqiyi { font-size: 7px; fill: #fff; }
.letter, .modes svg { overflow: visible; }

.tabs { display: flex; height: 28px; flex: none; background: linear-gradient(90deg, #dde8f0, #e8f1f8 80%); border-bottom: 4px solid #b0d0ea; box-shadow: inset 0 -1px #7fa5c4; padding-top: 3px; }
.tab { display: flex; align-items: center; height: 20px; padding: 0 8px 0 9px; gap: 2px; background: #dcdfe2; }
.tab.active { width: 146px; height: 21px; padding: 0 7px 0 16px; background: linear-gradient(#dcebf6, #b8d6ec); clip-path: polygon(15px 0, 100% 0, 100% 100%, 0 100%); border-right: 1px solid #7fa5c4; color: #1c4c6c; font-weight: 700; }
.tab-icon { width: 14px; height: 14px; flex: none; }
.tab-label { flex: 1; font-size: 9px; text-align: left; white-space: nowrap; }
.active .tab-label { font-size: 10px; }
.tab-close { margin-left: 6px; }
.active .tab-close { margin-left: 0; }
.tab-close svg { width: 11px; height: 11px; }

.workspace { display: flex; flex: 1; min-height: 0; background: #b0d0ea; padding-right: 3px; }
.modes { width: 26px; flex: none; display: flex; flex-direction: column; background: linear-gradient(90deg, #e2f0fa, #b4d3ea); border-top: 1px dotted #fff; padding-top: 6px; }
.mode-set { border-bottom: 1px solid #8fadc4; margin: 0 2px 1px; }
.modes button { display: flex; width: 22px; height: 20px; align-items: center; justify-content: center; }
.modes svg { width: 16px; height: 16px; }
.mode-set:nth-child(3) { border-bottom: 0; }
.orient { margin-top: 14px; padding: 4px 2px 0; border-top: 1px dotted #fff; }
.angle { display: block; width: 22px; height: 13px; border: 0; margin: 0 0 5px; padding: 0; background: #fff; font: 10px/12px "Liberation Serif", serif; color: #111; }

.side { width: 81px; flex: none; display: flex; flex-direction: column; gap: 3px; }
.overview { height: 67px; background: #dfdece; border: 1px solid #83929c; }
.overview svg { display: block; width: 100%; height: 100%; }
.devices { flex: 1; background: #fff; border: 1px solid #4b7ba0; min-height: 0; }
.devices-head { display: flex; align-items: center; height: 15px; gap: 3px; padding-left: 1px; background: linear-gradient(#e2eef8, #c4dcee); }
.badge { width: 11px; height: 11px; border-radius: 2px; background: #0f52dc; color: #fff; font: 700 9px/11px "Liberation Sans", Arial, sans-serif; }
.devices-title { margin-left: 5px; font-size: 9px; }
.device-list { list-style: none; margin: 0; padding: 0; font-size: 9px; line-height: 11px; }
.device-list li { padding-left: 1px; }
.device-list .selected { background: #0a77d6; color: #fff; }

.canvas { flex: 1; min-width: 0; margin-left: 2px; background: #dfdfd1; border: 1px solid #84867e; border-width: 0 1px 1px; }
.sheet { display: block; width: 100%; height: 100%; }
.minor { fill: #c9c9bb; }
.major { fill: #b1b1a5; }
.wire { fill: none; stroke: #003d0c; stroke-width: 2; }
.node { fill: #003d0c; }
.part { fill: #c8c6a9; stroke: #860c04; stroke-width: 2; }
.part .dark { fill: #000; }
.part .thin { stroke-width: 1; }
.part .socket { fill: #e0dfd0; }
.pin { font-size: 13px; fill: #1c1c18; }
.ref { font-size: 19px; fill: #1c1c18; }
.end { text-anchor: end; }
.mid { text-anchor: middle; }
.bar { text-decoration: overline; }
.error { fill: #860c04; }

.statusbar { display: flex; align-items: center; height: 24px; flex: none; padding-top: 2px; background: linear-gradient(#e8f3fb, #cbe2f3 60%, #a9cce6); font-size: 9px; white-space: nowrap; border-bottom: 1px solid #8fa9bb; }
.sim { display: flex; padding-left: 6px; width: 125px; }
.sim button { flex: 1; display: flex; justify-content: center; }
.sim svg { width: 16px; height: 16px; }
.messages { display: flex; align-items: center; width: 88px; gap: 3px; padding-left: 10px; border-right: 1px solid #9db4c5; }
.messages svg { width: 16px; height: 16px; flex: none; }
.status-text { width: 279px; overflow: hidden; margin-left: 5px; padding-left: 6px; border-left: 1px dotted #7d95a6; border-right: 1px dotted #7d95a6; line-height: 20px; }
.coords { flex: 1; display: flex; justify-content: flex-end; overflow: hidden; }
.cy { margin-left: 353px; }
.unit { margin-left: 15px; color: #22229a; width: 8px; }

.taskbar { display: flex; justify-content: space-between; height: 34px; flex: none; background: linear-gradient(90deg, #20363f, #1d3342 60%, #152744); color: #fff; }
.apps { display: flex; width: 580px; }
.apps button { flex: 1; display: flex; align-items: center; justify-content: center; }
.apps svg { width: 20px; height: 20px; overflow: visible; }
.apps .running { background: linear-gradient(#a5b8a8, #a5b8a8) bottom / 34px 2px no-repeat; }
.apps .current { background-color: #4d5f6b; background-size: 100% 2px; }
.tray { display: flex; align-items: center; padding-right: 7px; margin-right: 3px; border-right: 1px solid #73808c; }
.ime { display: flex; width: 102px; align-items: center; font: 14px "Noto Sans CJK SC", "DejaVu Sans", sans-serif; line-height: 16px; }
.ime span { width: 17px; text-align: center; white-space: nowrap; }
.ime .boxed { background: #fff; color: #1a2c3c; font-size: 12px; line-height: 13px; width: 13px; margin: 0 2px; }
.system { display: flex; width: 100px; }
.system button { flex: 1; display: flex; justify-content: center; }
.system svg { width: 14px; height: 14px; }
.clock { width: 60px; display: flex; flex-direction: column; align-items: center; font: 11px/15px "Open Sans", "Noto Sans", sans-serif; }
.notify { width: 34px; display: flex; justify-content: center; }
.notify svg { width: 16px; height: 16px; }

.watermark { position: absolute; left: 0; bottom: 0; width: 420px; height: 68px; pointer-events: none; }
.wm { position: absolute; color: #fff; white-space: nowrap; line-height: 1; }
.wm.small { left: 17px; bottom: 15px; font-size: 22px; font-weight: 700; opacity: .3; }
.wm.name { left: 34px; bottom: 32px; font: 700 23px/1 "Noto Sans CJK SC", sans-serif; opacity: .6; }
.wm.large { left: 95px; bottom: 28px; font-size: 33px; font-weight: 700; opacity: .6; }
.wm.time { left: 95px; bottom: 14px; font: 23px/1 "Open Sans", "Noto Sans", sans-serif; opacity: .3; }
```
